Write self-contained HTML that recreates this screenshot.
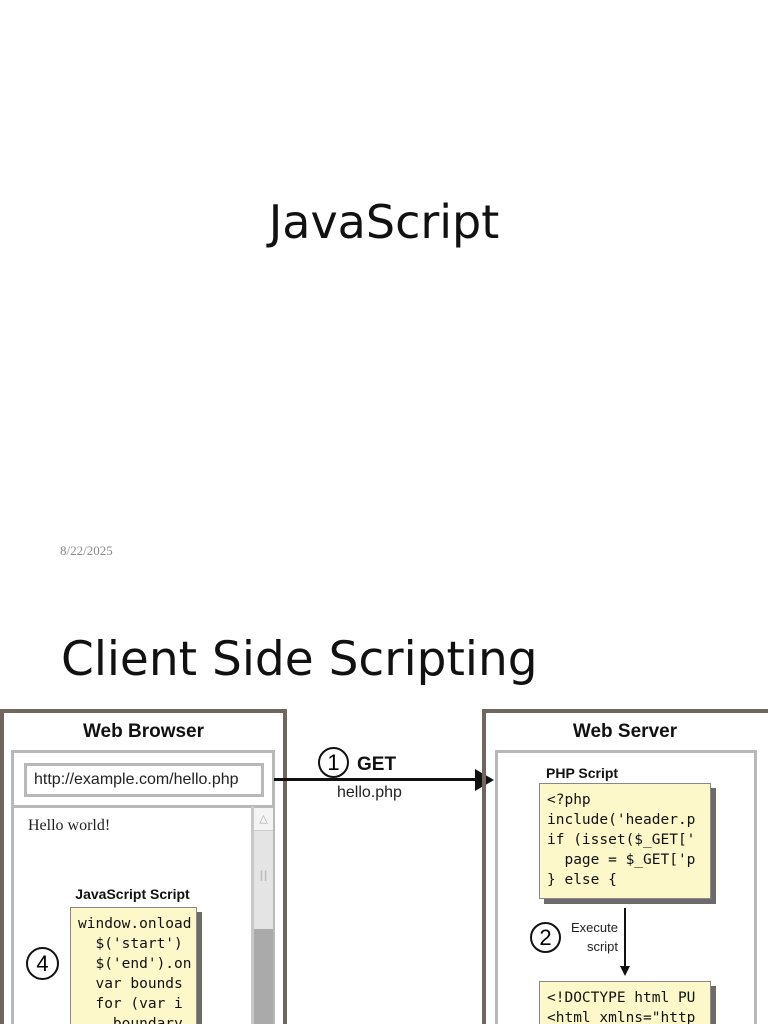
<!DOCTYPE html>
<html style="width:768px;height:1024px;overflow:hidden"><head><style>
body{margin:0;width:768px;height:1024px;position:relative;overflow:hidden;background:#fff;font-family:"DejaVu Sans","Liberation Sans",sans-serif}
.a{position:absolute}
.code{font-family:"DejaVu Sans Mono","Liberation Mono",monospace;font-size:14.5px;line-height:20px;white-space:pre;color:#111;overflow:hidden;padding:6px 0 0 7px;box-sizing:border-box;background:#fcf8c9;border:1px solid #888;box-shadow:5px 5px 0 #6e6a6a}
.circ{border:2px solid #111;border-radius:50%;text-align:center;font-family:"Liberation Sans",sans-serif;font-size:22px;box-sizing:border-box}
.lbl{font-family:"Liberation Sans",sans-serif;font-weight:bold;color:#111}
</style></head><body>
<div class="a" style="left:0;width:768px;top:195px;text-align:center;font-size:46px;color:#111">JavaScript</div>
<div class="a" style="left:60px;top:543px;font-family:'Liberation Serif',serif;font-size:13px;color:#8a8a8a">8/22/2025</div>
<div class="a" style="left:61px;top:632px;font-size:47px;color:#111">Client Side Scripting</div>

<div class="a" style="left:0;top:709px;width:287px;height:330px;border:4px solid #6f665d;box-sizing:border-box"></div>
<div class="a lbl" style="left:0;width:287px;top:721px;text-align:center;font-size:19px">Web Browser</div>
<div class="a" style="left:11px;top:750px;width:264px;height:290px;border:3px solid #b8b8b8;box-sizing:border-box"></div>
<div class="a" style="left:24px;top:763px;width:240px;height:34px;border:3px solid #b8b8b8;box-sizing:border-box;font-family:'Liberation Sans',sans-serif;font-size:16px;padding:5px 0 0 7px;color:#222">http://example.com/hello.php</div>
<div class="a" style="left:12px;top:805px;width:262px;height:3px;background:#b8b8b8"></div>
<div class="a" style="left:251px;top:806px;width:3px;height:220px;background:#c8c8c8"></div>
<div class="a" style="left:254px;top:808px;width:19px;height:22px;background:#f4f4f4;border-bottom:1px solid #ccc;color:#aaa;font-size:11px;text-align:center;line-height:22px">△</div>
<div class="a" style="left:254px;top:831px;width:19px;height:98px;background:#e4e4e4;color:#bbb;font-size:14px;text-align:center;padding-top:38px;box-sizing:border-box">II</div>
<div class="a" style="left:254px;top:929px;width:19px;height:100px;background:#aaa"></div>
<div class="a" style="left:28px;top:817px;font-family:'Liberation Serif',serif;font-size:16px;color:#222">Hello world!</div>
<div class="a lbl" style="left:60px;width:145px;top:886px;text-align:center;font-size:14px">JavaScript Script</div>
<div class="a code" style="left:70px;top:907px;width:127px;height:130px">window.onload
  $('start')
  $('end').on
  var bounds
  for (var i
    boundary</div>
<div class="a circ" style="left:26px;top:947px;width:33px;height:33px;line-height:29px">4</div>

<div class="a" style="left:274px;top:778px;width:204px;height:3px;background:#111"></div>
<div class="a" style="left:475px;top:769px;width:0;height:0;border-left:19px solid #111;border-top:11px solid transparent;border-bottom:11px solid transparent"></div>
<div class="a circ" style="left:318px;top:747px;width:31px;height:31px;line-height:27px">1</div>
<div class="a lbl" style="left:357px;top:754px;font-size:19px">GET</div>
<div class="a" style="left:337px;top:784px;font-family:'Liberation Sans',sans-serif;font-size:16px;color:#222">hello.php</div>

<div class="a" style="left:482px;top:709px;width:290px;height:330px;border:4px solid #6f665d;box-sizing:border-box"></div>
<div class="a lbl" style="left:482px;width:286px;top:721px;text-align:center;font-size:19px">Web Server</div>
<div class="a" style="left:495px;top:750px;width:262px;height:290px;border:3px solid #b8b8b8;box-sizing:border-box"></div>
<div class="a lbl" style="left:546px;top:765px;font-size:14px">PHP Script</div>
<div class="a code" style="left:539px;top:783px;width:172px;height:116px">&lt;?php
include('header.p
if (isset($_GET['
  page = $_GET['p
} else {</div>
<div class="a" style="left:624px;top:908px;width:2px;height:60px;background:#111"></div>
<div class="a" style="left:620px;top:966px;width:0;height:0;border-top:10px solid #111;border-left:5px solid transparent;border-right:5px solid transparent"></div>
<div class="a circ" style="left:530px;top:922px;width:31px;height:31px;line-height:27px">2</div>
<div class="a" style="left:555px;top:918px;width:63px;text-align:right;font-family:'Liberation Sans',sans-serif;font-size:13px;line-height:19px;color:#222">Execute<br>script</div>
<div class="a code" style="left:539px;top:981px;width:172px;height:60px">&lt;!DOCTYPE html PU
&lt;html xmlns="http</div>
</body></html>
